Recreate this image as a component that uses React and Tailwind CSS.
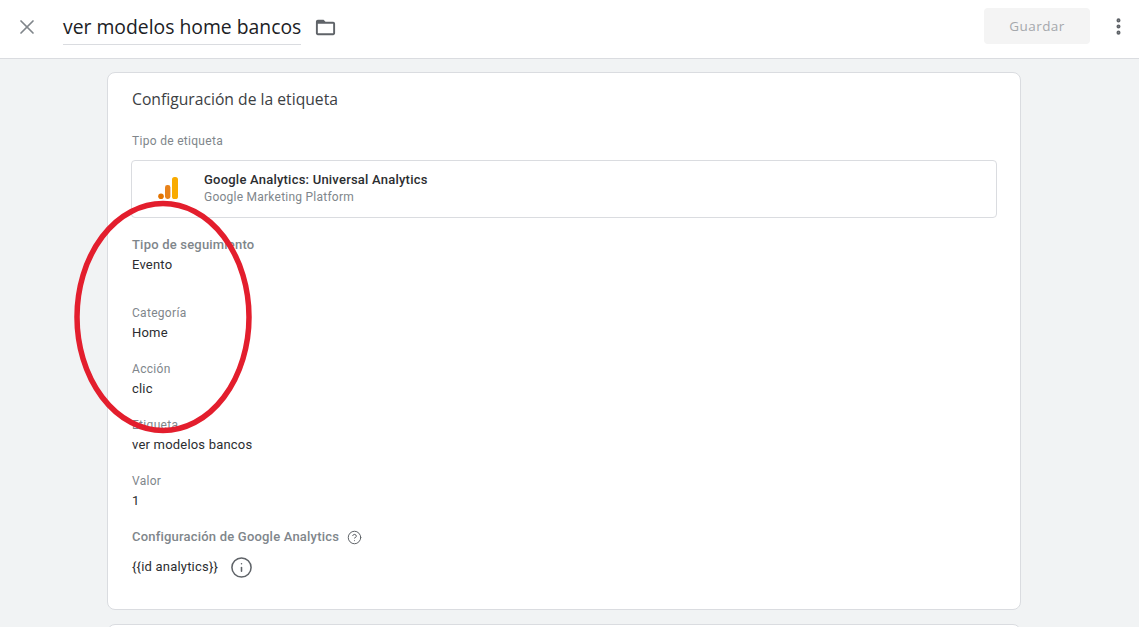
import { X, EllipsisVertical, CircleHelp, Info } from "lucide-react";

const campos = [
  { label: "Categoría", valor: "Home" },
  { label: "Acción", valor: "clic" },
  { label: "Etiqueta", valor: "ver modelos bancos" },
  { label: "Valor", valor: "1" },
];

function Campo({ label, valor, className = "" }) {
  return (
    <div className={className}>
      <div className="h-5 text-[12px] leading-5 tracking-[0.3px] text-[#80868b]">{label}</div>
      <div className="h-5 text-[13px] leading-5 tracking-[0.2px] text-[#2b2d30]">{valor}</div>
    </div>
  );
}

function IconoCarpeta() {
  return (
    <svg width="23" height="23" viewBox="0 0 24 24" fill="#5f6368" className="block">
      <path d="M20 6h-8l-2-2H4c-1.1 0-1.99.9-1.99 2L2 18c0 1.1.9 2 2 2h16c1.1 0 2-.9 2-2V8c0-1.1-.9-2-2-2zm0 12H4V8h16v10z" />
    </svg>
  );
}

function LogoAnalytics() {
  return (
    <svg width="20" height="22" viewBox="0 0 20 22" className="block">
      <circle cx="3" cy="19.2" r="2.8" fill="#e37400" />
      <rect x="7" y="8" width="5.4" height="14" rx="2.4" fill="#e8821a" />
      <rect x="14" y="0" width="6" height="22" rx="2.6" fill="#f9ab00" />
    </svg>
  );
}

export default function App() {
  return (
    <div className="relative h-[627px] w-[1139px] overflow-hidden bg-[#f1f3f4] font-['Roboto',sans-serif]">
      {/* Barra superior */}
      <header className="flex h-[59px] items-center border-b border-[#dadce0] bg-white pb-1 pl-[15px] pr-[10px]">
        <X size={24} strokeWidth={1.7} className="text-[#80868b]" />
        <div className="ml-6 h-[36px] w-[238px] whitespace-nowrap border-b border-[#dadce0] font-['Open_Sans',sans-serif] text-[19.35px] leading-[36px] text-[#202124]">
          ver modelos home bancos
        </div>
        <div className="ml-[13px]"><IconoCarpeta /></div>
        <button className="ml-auto mt-[-2px] h-9 w-[106px] rounded bg-[#f4f4f4] font-['Open_Sans',sans-serif] text-[13.5px] font-medium tracking-[0.45px] text-[#a5a8ac]">
          Guardar
        </button>
        <EllipsisVertical size={21} strokeWidth={2.6} className="ml-[18px] mt-[-2px] text-[#5f6368]" />
      </header>

      <main className="flex flex-col items-start pl-[107px] pt-[13px]">
        {/* Tarjeta de configuración */}
        <section className="h-[538px] w-[914px] rounded-lg border border-[#dadce0] bg-white px-6 pt-[15px]">
          <h2 className="h-[22px] font-['Open_Sans',sans-serif] text-[15.7px] leading-[22px] text-[#3c4043]">
            Configuración de la etiqueta
          </h2>
          <div className="mt-[21px] h-5 text-[12px] leading-5 tracking-[0.3px] text-[#80868b]">Tipo de etiqueta</div>

          <div className="-mx-px mt-[9px] flex h-[58px] items-center rounded border border-[#dadce0] pl-[26px]">
            <div className="mt-[-2px]"><LogoAnalytics /></div>
            <div className="ml-[26px] mt-[-1px]">
              <div className="mt-[-1px] text-[13px] font-medium leading-[17px] tracking-[0.22px] text-[#2b2d30]">
                Google Analytics: Universal Analytics
              </div>
              <div className="mt-[1px] text-[12px] leading-[17px] tracking-[0.24px] text-[#80868b]">Google Marketing Platform</div>
            </div>
          </div>

          <Campo label="Tipo de seguimiento" valor="Evento" className="mt-[17px] [&>div:first-child]:text-[13px] [&>div:first-child]:font-medium [&>div:first-child]:tracking-[0.2px]" />
          <div className="mt-[28px] flex flex-col gap-4">
            {campos.map((c) => (
              <Campo key={c.label} label={c.label} valor={c.valor} />
            ))}
          </div>

          <div className="mt-[16px] flex h-5 items-center text-[13px] font-medium tracking-[0.2px] text-[#80868b]">
            Configuración de Google Analytics
            <CircleHelp size={15} strokeWidth={1.6} className="ml-[8px] text-[#5f6368]" />
          </div>
          <div className="mt-[8px] flex h-[24px] items-center text-[13px] tracking-[0.2px] text-[#2b2d30]">
            {"{{id analytics}}"}
            <Info size={23} strokeWidth={1.6} className="ml-[12px] mt-[1px] text-[#5f6368]" />
          </div>
        </section>

        {/* Siguiente tarjeta, cortada por la ventana */}
        <section className="mt-[14px] h-10 w-[914px] rounded-lg border border-[#dadce0] bg-white" />
      </main>

      {/* Marca roja sobre la captura */}
      <svg width="190" height="240" viewBox="0 0 190 240" className="absolute left-[68px] top-[197px]">
        <ellipse cx="95" cy="120" rx="86" ry="113.5" fill="none" stroke="#e31e2d" strokeWidth="5.5" />
      </svg>
    </div>
  );
}
